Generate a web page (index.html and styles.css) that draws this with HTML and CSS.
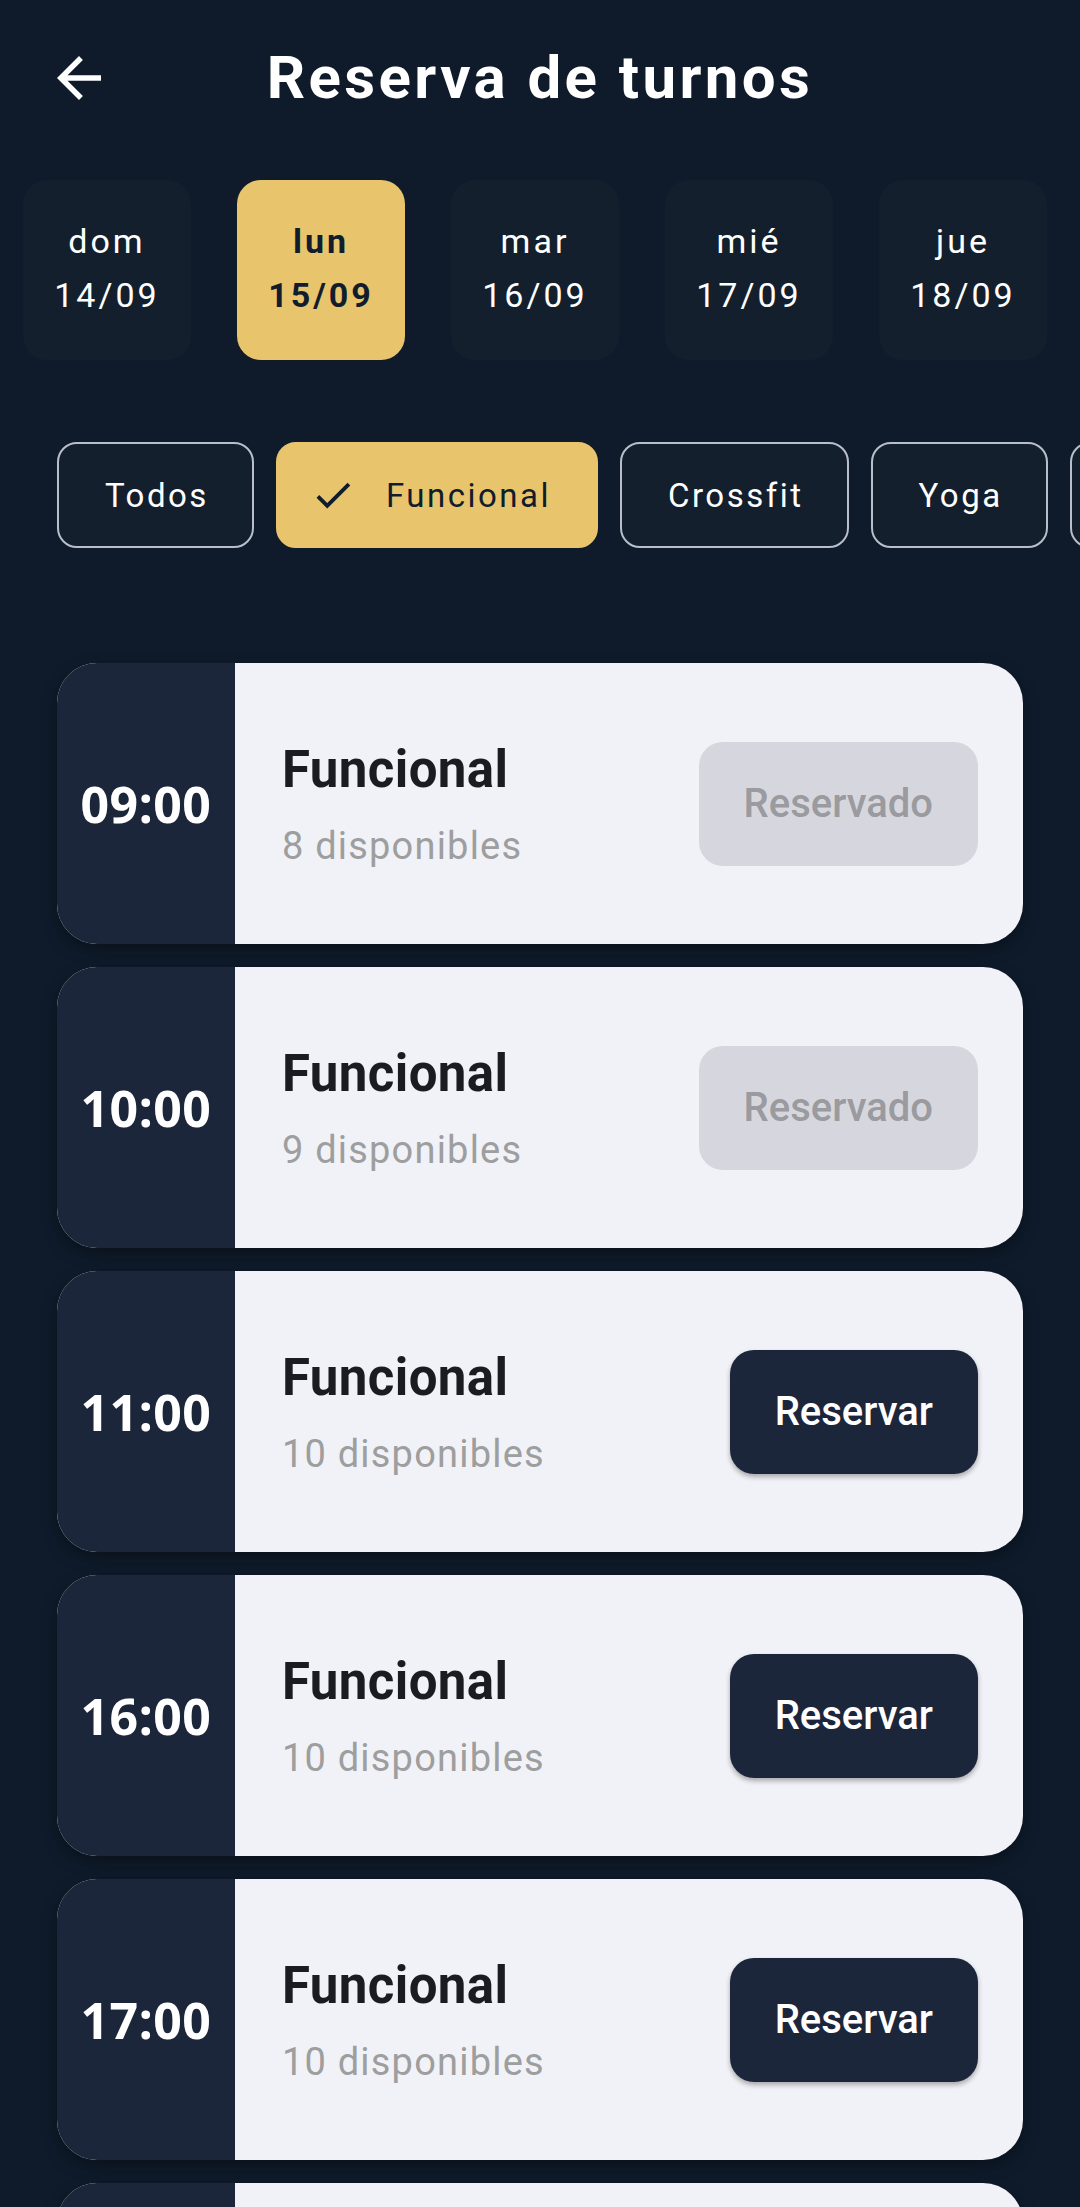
FILE: index.html
```html
<!DOCTYPE html>
<html lang="es">
<head>
<meta charset="utf-8">
<title>Reserva de turnos</title>
<link rel="stylesheet" href="styles.css">
</head>
<body>
<div class="screen">
  <header class="topbar">
    <div class="back">
      <svg class="back-icon" viewBox="0 0 24 24" width="66" height="66"><path d="M20 11H7.83l5.59-5.59L12 4l-8 8 8 8 1.41-1.41L7.83 13H20v-2z" fill="#ffffff"/></svg>
    </div>
    <h1 class="title">Reserva de turnos</h1>
    <div></div>
  </header>

  <div class="days">
    <div class="day"><span class="day-name">dom</span><span class="day-date">14/09</span></div>
    <div class="day day-active"><span class="day-name">lun</span><span class="day-date">15/09</span></div>
    <div class="day"><span class="day-name">mar</span><span class="day-date">16/09</span></div>
    <div class="day"><span class="day-name">mié</span><span class="day-date">17/09</span></div>
    <div class="day"><span class="day-name">jue</span><span class="day-date">18/09</span></div>
  </div>

  <div class="chips">
    <div class="chip">Todos</div>
    <div class="chip chip-active">
      <svg class="check" viewBox="0 0 24 24" width="46" height="46"><path d="M9 16.17L4.83 12l-1.42 1.41L9 19 21 7l-1.41-1.41z" fill="#111c2c"/></svg>
      <span>Funcional</span>
    </div>
    <div class="chip">Crossfit</div>
    <div class="chip">Yoga</div>
    <div class="chip">Pilates</div>
  </div>

  <div class="list">
    <div class="slot">
      <div class="slot-time">09:00</div>
      <div class="slot-body">
        <div class="slot-info"><div class="slot-title">Funcional</div><div class="slot-sub">8 disponibles</div></div>
        <div class="btn btn-done">Reservado</div>
      </div>
    </div>
    <div class="slot">
      <div class="slot-time">10:00</div>
      <div class="slot-body">
        <div class="slot-info"><div class="slot-title">Funcional</div><div class="slot-sub">9 disponibles</div></div>
        <div class="btn btn-done">Reservado</div>
      </div>
    </div>
    <div class="slot">
      <div class="slot-time">11:00</div>
      <div class="slot-body">
        <div class="slot-info"><div class="slot-title">Funcional</div><div class="slot-sub">10 disponibles</div></div>
        <div class="btn btn-book">Reservar</div>
      </div>
    </div>
    <div class="slot">
      <div class="slot-time">16:00</div>
      <div class="slot-body">
        <div class="slot-info"><div class="slot-title">Funcional</div><div class="slot-sub">10 disponibles</div></div>
        <div class="btn btn-book">Reservar</div>
      </div>
    </div>
    <div class="slot">
      <div class="slot-time">17:00</div>
      <div class="slot-body">
        <div class="slot-info"><div class="slot-title">Funcional</div><div class="slot-sub">10 disponibles</div></div>
        <div class="btn btn-book">Reservar</div>
      </div>
    </div>
    <div class="slot">
      <div class="slot-time">18:00</div>
      <div class="slot-body">
        <div class="slot-info"><div class="slot-title">Funcional</div><div class="slot-sub">10 disponibles</div></div>
        <div class="btn btn-book">Reservar</div>
      </div>
    </div>
  </div>
</div>
</body>
</html>
```

FILE: styles.css
```css
html, body {
  margin: 0;
  padding: 0;
  background: #0f1b2b;
  width: 1080px;
  height: 2207px;
  overflow: hidden;
  font-family: Roboto, "Noto Sans", sans-serif;
}

.screen {
  width: 1080px;
  height: 2207px;
  overflow: hidden;
}

.topbar {
  display: grid;
  grid-template-columns: 1fr auto 1fr;
  align-items: center;
  height: 68px;
  margin-top: 44px;
}

.back {
  padding-left: 46px;
  display: flex;
  align-items: center;
}

.back-icon {
  display: block;
}

.title {
  margin: 0;
  font-family: Roboto, sans-serif;
  font-weight: 700;
  font-size: 60px;
  letter-spacing: 3.4px;
  color: #ffffff;
  line-height: 68px;
}

.days {
  display: flex;
  gap: 46px;
  padding-left: 23px;
  margin-top: 68px;
}

.day {
  flex: 0 0 168px;
  height: 180px;
  border-radius: 24px;
  background: #141f2d;
  color: #ffffff;
  display: flex;
  flex-direction: column;
  align-items: center;
  justify-content: center;
  gap: 14px;
  font-size: 34px;
  letter-spacing: 3px;
  padding-bottom: 4px;
  box-sizing: border-box;
}

.day span {
  line-height: 40px;
}

.day-active {
  background: #e8c46c;
  color: #111c2c;
  font-weight: 700;
}

.chips {
  display: flex;
  gap: 22px;
  padding-left: 57px;
  margin-top: 82px;
  overflow: hidden;
  white-space: nowrap;
}

.chip {
  flex: 0 0 auto;
  height: 106px;
  box-sizing: border-box;
  border: 2px solid #b9bfca;
  border-radius: 20px;
  background: #141f2d;
  color: #ffffff;
  font-size: 33px;
  letter-spacing: 2.5px;
  padding: 0 43px 0 46px;
  display: flex;
  align-items: center;
}

.chip-active {
  background: #e8c46c;
  border-color: #e8c46c;
  color: #111c2c;
  padding: 0 45px 0 32px;
  gap: 30px;
}

.check {
  display: block;
}

.list {
  display: flex;
  flex-direction: column;
  gap: 23px;
  margin-top: 115px;
  padding: 0 57px;
}

.slot {
  flex: 0 0 281px;
  height: 281px;
  display: flex;
  border-radius: 40px;
  overflow: hidden;
  background: #f1f2f7;
  box-shadow: 0 6px 16px rgba(0, 0, 0, 0.35);
}

.slot-time {
  flex: 0 0 178px;
  background: #1c263b;
  color: #ffffff;
  display: flex;
  align-items: center;
  justify-content: center;
  font-family: "Noto Sans", "Open Sans", sans-serif;
  font-weight: 700;
  font-size: 50px;
  letter-spacing: 0.5px;
}

.slot-body {
  flex: 1;
  display: flex;
  align-items: center;
  justify-content: space-between;
  padding: 0 45px 0 47px;
}

.slot-info {
  display: flex;
  flex-direction: column;
  gap: 24px;
}

.slot-title {
  font-size: 51px;
  font-weight: 700;
  color: #1a1c21;
  line-height: 60px;
  letter-spacing: 0.4px;
}

.slot-sub {
  font-size: 38px;
  letter-spacing: 1.2px;
  color: #9e9e9e;
  line-height: 44px;
}

.btn {
  height: 124px;
  border-radius: 24px;
  padding: 0 45px;
  display: flex;
  align-items: center;
  font-size: 40px;
  font-weight: 500;
}

.btn-done {
  background: #d6d7de;
  color: #9a9a9f;
}

.btn-book {
  background: #1c263b;
  color: #ffffff;
  box-shadow: 0 3px 5px rgba(0, 0, 0, 0.3);
}
```
